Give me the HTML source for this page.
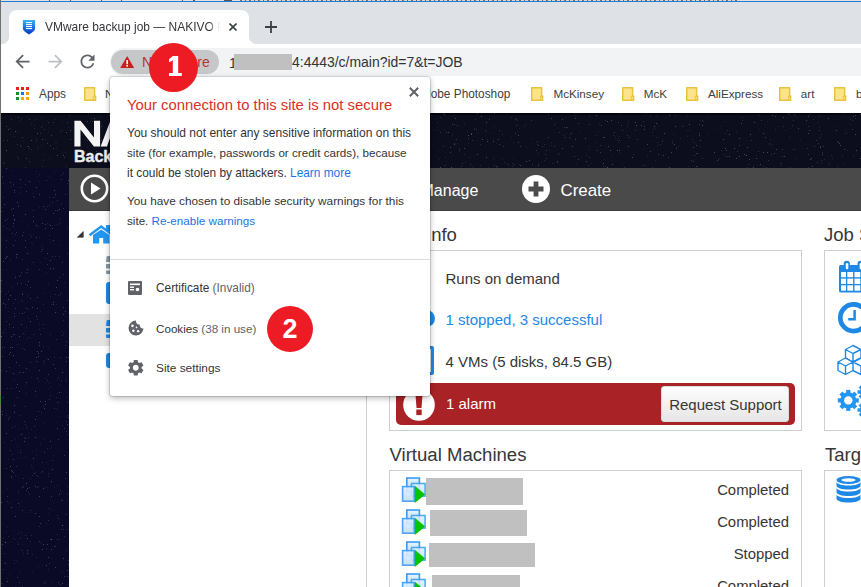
<!DOCTYPE html>
<html><head><meta charset="utf-8">
<style>
*{margin:0;padding:0;box-sizing:border-box}
html,body{width:861px;height:587px;overflow:hidden;background:#dee1e6;font-family:"Liberation Sans",sans-serif;position:relative}
.a{position:absolute}
.t{position:absolute;white-space:nowrap;line-height:1}
</style></head><body>

<!-- top strip -->
<div class="a" style="left:0;top:0;width:861px;height:1px;background:#e2e2e2"></div><svg class="a" style="left:0;top:0" width="240" height="1"><path d="M49 0h1v1h-1zM70 0h1v1h-1zM101 0h1v1h-1zM121 0h1v1h-1zM182 0h1v1h-1zM193 0h2v1h-2zM224 0h8v1h-8z" fill="#555"/></svg>
<div class="a" style="left:240px;top:0;width:500px;height:1px;background:repeating-linear-gradient(90deg,#8a6a50 0 2px,#d8dde4 2px 5px,#6a5a90 5px 6px,#e0d8d0 6px 9px)"></div>
<div class="a" style="left:0;top:1px;width:861px;height:1px;background:#1f7fd6"></div>

<!-- left border -->
<div class="a" style="left:0;top:0;width:1px;height:587px;background:#707070;z-index:50"></div><div class="a" style="left:0;top:395px;width:1px;height:10px;background:#3a8a3a;z-index:51"></div>

<!-- tab -->
<div class="a" style="left:9px;top:10px;width:240px;height:34px;background:#fff;border-radius:8px 8px 0 0"></div>
<div class="a" style="left:1px;top:36px;width:8px;height:8px;background:radial-gradient(circle at 0 0,#dee1e6 8px,#fff 8.5px)"></div>
<div class="a" style="left:249px;top:36px;width:8px;height:8px;background:radial-gradient(circle at 100% 0,#dee1e6 8px,#fff 8.5px)"></div>

<!-- favicon -->
<svg class="a" style="left:22px;top:19px" width="14" height="16" viewBox="22 19 14 16">
<defs><linearGradient id="fg" x1="0" y1="0" x2="0" y2="1"><stop offset="0" stop-color="#36b4fb"/><stop offset="1" stop-color="#0436c8"/></linearGradient></defs>
<path d="M22.9 20H35.1V28.6Q35.1 31.3 29 34.5Q22.9 31.3 22.9 28.6Z" fill="url(#fg)"/>
<g fill="#fff"><rect x="26" y="22" width="6" height="1.1"/><rect x="26" y="24" width="6" height="1.1"/><rect x="26" y="26" width="6" height="1.1"/><rect x="26" y="28" width="6" height="1.1"/></g>
</svg>
<div class="t" style="left:45px;top:22px;font-size:11.96px;color:#35363a;width:180px;overflow:hidden;-webkit-mask-image:linear-gradient(90deg,#000 165px,rgba(0,0,0,.25) 170px,transparent 176px)">VMware backup job — NAKIVO Backup</div>
<svg class="a" style="left:229px;top:23px" width="8" height="8" viewBox="0 0 8 8"><path d="M0.5 0.5L7.5 7.5M7.5 0.5L0.5 7.5" stroke="#3c4043" stroke-width="1.6"/></svg>
<svg class="a" style="left:265px;top:21px" width="12" height="12" viewBox="0 0 12 12"><path d="M6 0V12M0 6H12" stroke="#3c4043" stroke-width="1.8"/></svg>


<!-- page background -->
<div class="a" style="left:1px;top:112px;width:860px;height:56px;background:#0c0d1d"></div><div class="a" style="left:1px;top:113px;width:860px;height:2px;background:#04040c"></div>
<div class="a" style="left:1px;top:168px;width:860px;height:419px;background:#0a0a26"></div>
<svg class="a" style="left:0;top:112px" width="861" height="475" viewBox="0 0 861 475"><path fill="#b8bce0" opacity="0.1" d="M31 265h1v1h-1zM48 19h1v1h-1zM30 400h1v1h-1zM32 132h1v1h-1zM58 336h1v1h-1zM22 109h1v1h-1zM5 298h1v1h-1zM6 157h1v1h-1zM55 84h1v1h-1zM8 199h1v1h-1zM67 381h1v1h-1zM59 304h1v1h-1zM26 215h1v1h-1zM13 73h1v1h-1zM51 446h1v1h-1zM60 286h1v1h-1zM42 133h1v1h-1zM2 127h1v1h-1zM12 175h1v1h-1zM48 277h1v1h-1zM51 334h1v1h-1zM59 272h1v1h-1zM43 181h1v1h-1zM50 184h1v1h-1zM48 236h1v1h-1zM23 316h1v1h-1zM60 182h1v1h-1zM40 150h1v1h-1zM19 80h1v1h-1zM31 130h1v1h-1zM67 214h1v1h-1zM49 271h1v1h-1zM10 22h1v1h-1zM43 311h1v1h-1zM1 224h1v1h-1zM62 41h1v1h-1zM9 215h1v1h-1zM65 220h1v1h-1zM50 388h1v1h-1zM15 427h1v1h-1zM22 432h1v1h-1zM56 30h1v1h-1zM36 343h1v1h-1zM65 40h1v1h-1zM20 346h1v1h-1zM44 248h1v1h-1zM39 95h1v1h-1zM42 13h1v1h-1zM9 205h1v1h-1zM56 427h1v1h-1zM8 347h1v1h-1zM18 93h1v1h-1zM14 299h1v1h-1zM58 290h1v1h-1zM59 110h1v1h-1zM15 474h1v1h-1zM17 345h1v1h-1zM57 200h1v1h-1zM54 59h1v1h-1zM2 95h1v1h-1zM35 360h1v1h-1zM13 33h1v1h-1zM39 69h1v1h-1zM41 6h1v1h-1zM48 401h1v1h-1zM35 7h1v1h-1zM67 382h1v1h-1zM56 192h1v1h-1zM24 222h1v1h-1zM16 448h1v1h-1zM46 160h1v1h-1zM45 270h1v1h-1zM18 190h1v1h-1zM18 430h1v1h-1zM56 36h1v1h-1zM45 266h1v1h-1zM30 226h1v1h-1zM36 445h1v1h-1zM67 387h1v1h-1zM43 216h1v1h-1zM36 59h1v1h-1zM31 317h1v1h-1zM40 199h1v1h-1zM43 48h1v1h-1zM37 34h1v1h-1zM26 227h1v1h-1zM15 163h1v1h-1zM51 398h1v1h-1zM56 296h1v1h-1zM29 122h1v1h-1zM7 415h1v1h-1zM6 39h1v1h-1zM25 344h1v1h-1zM49 270h1v1h-1zM27 184h1v1h-1zM60 133h1v1h-1zM38 269h1v1h-1zM55 30h1v1h-1zM38 374h1v1h-1zM6 301h1v1h-1zM15 363h1v1h-1zM34 255h1v1h-1zM50 336h1v1h-1zM66 304h1v1h-1zM51 470h1v1h-1zM20 460h1v1h-1zM5 217h1v1h-1zM40 431h1v1h-1zM17 340h1v1h-1zM41 106h1v1h-1zM22 260h1v1h-1zM4 450h1v1h-1zM11 74h1v1h-1zM58 390h1v1h-1zM65 278h1v1h-1zM54 198h1v1h-1zM32 339h1v1h-1zM32 459h1v1h-1zM57 310h1v1h-1zM49 112h1v1h-1zM65 267h1v1h-1zM50 157h1v1h-1zM10 44h1v1h-1zM57 281h1v1h-1zM11 58h1v1h-1zM53 390h1v1h-1zM28 332h1v1h-1zM67 375h1v1h-1zM2 157h1v1h-1zM14 448h1v1h-1zM25 219h1v1h-1zM9 462h1v1h-1zM10 429h1v1h-1zM39 125h1v1h-1zM9 391h1v1h-1zM68 446h1v1h-1zM46 350h1v1h-1zM55 7h1v1h-1zM43 327h1v1h-1zM34 472h1v1h-1zM28 206h1v1h-1zM35 188h1v1h-1zM21 187h1v1h-1zM46 411h1v1h-1zM39 429h1v1h-1zM7 376h1v1h-1zM65 0h1v1h-1zM23 29h1v1h-1zM21 236h1v1h-1zM21 438h1v1h-1zM33 81h1v1h-1zM14 418h1v1h-1zM49 64h1v1h-1zM61 280h1v1h-1zM7 466h1v1h-1zM41 135h1v1h-1zM18 381h1v1h-1zM6 135h1v1h-1zM32 356h1v1h-1zM38 306h1v1h-1zM47 247h1v1h-1zM30 367h1v1h-1zM54 375h1v1h-1zM41 339h1v1h-1zM54 113h1v1h-1zM5 195h1v1h-1zM38 114h1v1h-1zM25 160h1v1h-1zM45 27h1v1h-1zM27 400h1v1h-1zM12 96h1v1h-1zM15 222h1v1h-1zM27 34h1v1h-1zM19 8h1v1h-1zM13 124h1v1h-1zM49 127h1v1h-1zM64 170h1v1h-1zM53 343h1v1h-1zM62 9h1v1h-1zM36 26h1v1h-1zM27 113h1v1h-1zM37 64h1v1h-1zM50 316h1v1h-1zM28 183h1v1h-1zM15 327h1v1h-1zM60 111h1v1h-1zM44 42h1v1h-1zM23 236h1v1h-1zM2 164h1v1h-1zM18 317h1v1h-1zM42 453h1v1h-1zM25 273h1v1h-1zM28 197h1v1h-1zM19 394h1v1h-1zM47 111h1v1h-1zM513 46h1v1h-1zM457 31h1v1h-1zM256 13h1v1h-1zM149 39h1v1h-1zM757 2h1v1h-1zM636 14h1v1h-1zM333 42h1v1h-1zM168 21h1v1h-1zM837 7h1v1h-1zM569 22h1v1h-1zM293 21h1v1h-1zM229 48h1v1h-1zM452 23h1v1h-1zM708 22h1v1h-1zM90 9h1v1h-1zM163 4h1v1h-1zM849 5h1v1h-1zM357 35h1v1h-1zM785 18h1v1h-1zM657 30h1v1h-1zM231 49h1v1h-1zM154 55h1v1h-1zM214 20h1v1h-1zM358 5h1v1h-1zM753 46h1v1h-1zM161 10h1v1h-1zM376 47h1v1h-1zM125 55h1v1h-1zM225 37h1v1h-1zM337 17h1v1h-1zM212 7h1v1h-1zM618 26h1v1h-1zM314 22h1v1h-1zM184 35h1v1h-1zM294 48h1v1h-1zM778 14h1v1h-1zM402 19h1v1h-1zM536 30h1v1h-1zM598 19h1v1h-1zM87 35h1v1h-1zM437 17h1v1h-1zM241 55h1v1h-1zM234 20h1v1h-1zM182 22h1v1h-1zM656 4h1v1h-1zM201 36h1v1h-1zM562 41h1v1h-1zM269 45h1v1h-1zM684 13h1v1h-1zM396 3h1v1h-1zM511 25h1v1h-1zM753 53h1v1h-1zM91 6h1v1h-1zM131 14h1v1h-1zM465 50h1v1h-1zM409 25h1v1h-1zM662 27h1v1h-1zM551 33h1v1h-1zM295 38h1v1h-1zM320 45h1v1h-1zM506 51h1v1h-1zM652 23h1v1h-1zM687 24h1v1h-1zM423 24h1v1h-1zM160 46h1v1h-1zM314 53h1v1h-1zM166 48h1v1h-1zM376 32h1v1h-1zM531 26h1v1h-1zM845 18h1v1h-1zM665 5h1v1h-1zM707 5h1v1h-1zM226 29h1v1h-1zM288 28h1v1h-1zM650 29h1v1h-1zM591 51h1v1h-1zM112 52h1v1h-1zM253 25h1v1h-1zM252 53h1v1h-1zM847 38h1v1h-1zM486 19h1v1h-1zM453 4h1v1h-1zM175 16h1v1h-1zM757 53h1v1h-1zM697 54h1v1h-1zM334 19h1v1h-1zM307 18h1v1h-1zM644 37h1v1h-1zM370 3h1v1h-1zM176 37h1v1h-1zM166 29h1v1h-1zM496 31h1v1h-1zM800 28h1v1h-1zM519 16h1v1h-1zM433 33h1v1h-1zM220 52h1v1h-1zM843 1h1v1h-1zM399 30h1v1h-1zM433 18h1v1h-1zM767 9h1v1h-1zM472 55h1v1h-1zM476 21h1v1h-1zM282 32h1v1h-1zM140 27h1v1h-1zM837 15h1v1h-1zM467 19h1v1h-1zM224 12h1v1h-1zM611 44h1v1h-1zM714 16h1v1h-1zM759 17h1v1h-1zM644 3h1v1h-1zM756 43h1v1h-1zM519 52h1v1h-1zM790 16h1v1h-1zM831 43h1v1h-1zM332 15h1v1h-1zM493 26h1v1h-1zM658 13h1v1h-1zM124 2h1v1h-1zM576 52h1v1h-1zM628 25h1v1h-1zM619 24h1v1h-1zM522 41h1v1h-1zM388 36h1v1h-1zM170 3h1v1h-1zM318 55h1v1h-1zM384 49h1v1h-1zM655 16h1v1h-1zM642 53h1v1h-1zM82 23h1v1h-1zM384 55h1v1h-1zM116 32h1v1h-1zM719 46h1v1h-1zM378 33h1v1h-1zM513 30h1v1h-1zM687 18h1v1h-1zM286 31h1v1h-1zM487 27h1v1h-1zM298 45h1v1h-1zM488 55h1v1h-1zM725 21h1v1h-1zM365 36h1v1h-1zM619 1h1v1h-1zM236 39h1v1h-1zM764 12h1v1h-1zM444 17h1v1h-1zM850 12h1v1h-1zM118 47h1v1h-1zM297 31h1v1h-1zM266 16h1v1h-1zM314 33h1v1h-1zM474 17h1v1h-1zM396 21h1v1h-1zM246 1h1v1h-1zM699 34h1v1h-1zM295 10h1v1h-1zM658 25h1v1h-1zM526 35h1v1h-1zM573 14h1v1h-1zM444 53h1v1h-1zM724 10h1v1h-1zM721 14h1v1h-1zM256 16h1v1h-1zM566 21h1v1h-1zM115 27h1v1h-1zM107 1h1v1h-1zM847 20h1v1h-1zM330 8h1v1h-1zM538 51h1v1h-1zM219 40h1v1h-1zM95 10h1v1h-1zM439 47h1v1h-1zM98 1h1v1h-1zM158 16h1v1h-1zM227 35h1v1h-1zM202 9h1v1h-1zM493 21h1v1h-1zM187 31h1v1h-1zM294 16h1v1h-1zM622 51h1v1h-1zM216 22h1v1h-1zM655 48h1v1h-1zM182 22h1v1h-1zM687 3h1v1h-1zM509 19h1v1h-1zM747 52h1v1h-1zM402 17h1v1h-1zM688 54h1v1h-1zM502 47h1v1h-1zM250 1h1v1h-1zM570 26h1v1h-1zM277 33h1v1h-1zM549 38h1v1h-1zM452 22h1v1h-1zM421 16h1v1h-1zM770 27h1v1h-1zM173 7h1v1h-1zM546 26h1v1h-1zM179 30h1v1h-1zM266 30h1v1h-1zM620 40h1v1h-1zM436 6h1v1h-1zM579 20h1v1h-1zM391 36h1v1h-1zM604 47h1v1h-1zM270 42h1v1h-1zM228 16h1v1h-1z"/><path fill="#b8bce0" opacity="0.16" d="M63 221h1v1h-1zM13 114h1v1h-1zM36 304h1v1h-1zM68 472h1v1h-1zM20 33h1v1h-1zM58 183h1v1h-1zM9 117h1v1h-1zM39 212h1v1h-1zM15 128h1v1h-1zM21 420h1v1h-1zM15 122h1v1h-1zM21 34h1v1h-1zM14 451h1v1h-1zM17 334h1v1h-1zM12 342h1v1h-1zM39 62h1v1h-1zM25 423h1v1h-1zM10 16h1v1h-1zM48 457h1v1h-1zM22 474h1v1h-1zM51 427h1v1h-1zM24 325h1v1h-1zM29 375h1v1h-1zM6 303h1v1h-1zM50 275h1v1h-1zM62 313h1v1h-1zM31 423h1v1h-1zM57 403h1v1h-1zM43 234h1v1h-1zM60 19h1v1h-1zM31 11h1v1h-1zM57 112h1v1h-1zM47 94h1v1h-1zM33 84h1v1h-1zM49 85h1v1h-1zM19 164h1v1h-1zM59 165h1v1h-1zM38 364h1v1h-1zM34 13h1v1h-1zM65 233h1v1h-1zM28 380h1v1h-1zM66 438h1v1h-1zM22 438h1v1h-1zM61 63h1v1h-1zM66 54h1v1h-1zM32 363h1v1h-1zM51 192h1v1h-1zM61 380h1v1h-1zM43 192h1v1h-1zM48 364h1v1h-1zM48 361h1v1h-1zM42 350h1v1h-1zM66 269h1v1h-1zM41 360h1v1h-1zM36 283h1v1h-1zM20 340h1v1h-1zM21 6h1v1h-1zM17 20h1v1h-1zM67 115h1v1h-1zM50 222h1v1h-1zM42 54h1v1h-1zM14 24h1v1h-1zM8 424h1v1h-1zM41 300h1v1h-1zM52 90h1v1h-1zM63 417h1v1h-1zM3 28h1v1h-1zM19 201h1v1h-1zM45 469h1v1h-1zM15 314h1v1h-1zM6 144h1v1h-1zM25 55h1v1h-1zM63 208h1v1h-1zM55 144h1v1h-1zM22 189h1v1h-1zM64 424h1v1h-1zM25 172h1v1h-1zM14 267h1v1h-1zM57 267h1v1h-1zM36 363h1v1h-1zM57 422h1v1h-1zM36 337h1v1h-1zM18 421h1v1h-1zM38 454h1v1h-1zM19 253h1v1h-1zM49 46h1v1h-1zM33 222h1v1h-1zM59 144h1v1h-1zM37 249h1v1h-1zM39 217h1v1h-1zM1 471h1v1h-1zM27 316h1v1h-1zM47 336h1v1h-1zM13 191h1v1h-1zM7 107h1v1h-1zM8 179h1v1h-1zM11 364h1v1h-1zM40 331h1v1h-1zM23 441h1v1h-1zM56 285h1v1h-1zM3 85h1v1h-1zM45 146h1v1h-1zM26 281h1v1h-1zM14 222h1v1h-1zM66 285h1v1h-1zM39 429h1v1h-1zM36 249h1v1h-1zM30 429h1v1h-1zM50 427h1v1h-1zM50 283h1v1h-1zM41 33h1v1h-1zM4 330h1v1h-1zM62 459h1v1h-1zM29 382h1v1h-1zM61 387h1v1h-1zM40 21h1v1h-1zM3 426h1v1h-1zM61 92h1v1h-1zM4 50h1v1h-1zM31 37h1v1h-1zM49 93h1v1h-1zM46 375h1v1h-1zM26 314h1v1h-1zM19 303h1v1h-1zM13 426h1v1h-1zM68 15h1v1h-1zM34 85h1v1h-1zM25 312h1v1h-1zM54 245h1v1h-1zM17 232h1v1h-1zM34 16h1v1h-1zM13 72h1v1h-1zM18 379h1v1h-1zM10 147h1v1h-1zM43 249h1v1h-1zM7 389h1v1h-1zM57 373h1v1h-1zM31 353h1v1h-1zM3 473h1v1h-1zM32 442h1v1h-1zM61 219h1v1h-1zM68 322h1v1h-1zM48 172h1v1h-1zM25 72h1v1h-1zM6 419h1v1h-1zM3 71h1v1h-1zM49 123h1v1h-1zM20 338h1v1h-1zM59 107h1v1h-1zM2 299h1v1h-1zM67 141h1v1h-1zM46 436h1v1h-1zM5 182h1v1h-1zM12 315h1v1h-1zM17 44h1v1h-1zM24 200h1v1h-1zM27 173h1v1h-1zM4 235h1v1h-1zM23 120h1v1h-1zM65 366h1v1h-1zM43 294h1v1h-1zM60 181h1v1h-1zM62 18h1v1h-1zM67 71h1v1h-1zM1 258h1v1h-1zM380 13h1v1h-1zM459 36h1v1h-1zM317 40h1v1h-1zM832 46h1v1h-1zM195 34h1v1h-1zM361 15h1v1h-1zM475 7h1v1h-1zM158 25h1v1h-1zM680 26h1v1h-1zM727 44h1v1h-1zM599 12h1v1h-1zM532 52h1v1h-1zM613 23h1v1h-1zM808 55h1v1h-1zM107 39h1v1h-1zM855 6h1v1h-1zM364 17h1v1h-1zM618 30h1v1h-1zM517 8h1v1h-1zM249 27h1v1h-1zM775 17h1v1h-1zM589 34h1v1h-1zM828 0h1v1h-1zM724 42h1v1h-1zM821 22h1v1h-1zM627 14h1v1h-1zM789 1h1v1h-1zM525 12h1v1h-1zM376 20h1v1h-1zM143 18h1v1h-1zM152 8h1v1h-1zM628 9h1v1h-1zM852 8h1v1h-1zM468 31h1v1h-1zM615 25h1v1h-1zM596 23h1v1h-1zM544 32h1v1h-1zM653 17h1v1h-1zM652 55h1v1h-1zM692 27h1v1h-1zM746 43h1v1h-1zM504 50h1v1h-1zM700 8h1v1h-1zM232 35h1v1h-1zM567 15h1v1h-1zM652 20h1v1h-1zM405 45h1v1h-1zM657 33h1v1h-1zM424 3h1v1h-1zM400 15h1v1h-1zM394 7h1v1h-1zM718 47h1v1h-1zM147 50h1v1h-1zM780 53h1v1h-1zM837 54h1v1h-1zM624 55h1v1h-1zM121 25h1v1h-1zM647 43h1v1h-1zM88 19h1v1h-1zM157 44h1v1h-1zM167 31h1v1h-1zM474 16h1v1h-1zM241 25h1v1h-1zM742 5h1v1h-1zM742 8h1v1h-1zM360 24h1v1h-1zM502 22h1v1h-1zM76 22h1v1h-1zM727 18h1v1h-1zM113 42h1v1h-1zM106 34h1v1h-1zM574 1h1v1h-1zM795 4h1v1h-1zM650 4h1v1h-1zM596 30h1v1h-1zM512 51h1v1h-1zM236 23h1v1h-1zM493 46h1v1h-1zM443 1h1v1h-1zM537 29h1v1h-1zM736 20h1v1h-1zM275 40h1v1h-1zM524 14h1v1h-1zM512 54h1v1h-1zM789 25h1v1h-1zM311 47h1v1h-1zM299 48h1v1h-1zM494 14h1v1h-1zM551 30h1v1h-1zM356 44h1v1h-1zM517 19h1v1h-1zM589 4h1v1h-1zM759 3h1v1h-1zM464 11h1v1h-1zM821 51h1v1h-1zM749 52h1v1h-1zM84 27h1v1h-1zM480 53h1v1h-1zM480 32h1v1h-1zM69 3h1v1h-1zM485 18h1v1h-1zM689 18h1v1h-1zM257 36h1v1h-1zM215 13h1v1h-1zM694 30h1v1h-1zM790 55h1v1h-1zM369 16h1v1h-1zM538 41h1v1h-1zM445 45h1v1h-1zM339 52h1v1h-1zM817 10h1v1h-1zM344 2h1v1h-1zM673 22h1v1h-1zM206 41h1v1h-1zM236 1h1v1h-1zM437 10h1v1h-1zM769 32h1v1h-1zM297 9h1v1h-1zM819 15h1v1h-1zM145 38h1v1h-1zM569 25h1v1h-1zM419 4h1v1h-1zM725 44h1v1h-1zM844 51h1v1h-1zM703 9h1v1h-1zM552 51h1v1h-1zM120 37h1v1h-1zM216 38h1v1h-1zM586 43h1v1h-1zM397 22h1v1h-1zM672 31h1v1h-1zM783 14h1v1h-1zM497 55h1v1h-1zM445 53h1v1h-1zM125 15h1v1h-1zM126 21h1v1h-1zM824 47h1v1h-1zM243 48h1v1h-1zM272 44h1v1h-1zM629 25h1v1h-1zM427 17h1v1h-1zM563 23h1v1h-1zM366 50h1v1h-1zM842 43h1v1h-1zM588 37h1v1h-1zM339 39h1v1h-1zM633 42h1v1h-1zM268 39h1v1h-1zM850 7h1v1h-1zM401 8h1v1h-1zM348 42h1v1h-1zM285 20h1v1h-1zM186 17h1v1h-1zM266 9h1v1h-1zM278 27h1v1h-1zM410 46h1v1h-1zM628 12h1v1h-1zM348 55h1v1h-1zM544 48h1v1h-1zM85 39h1v1h-1zM275 0h1v1h-1zM617 28h1v1h-1zM307 1h1v1h-1zM766 55h1v1h-1zM795 46h1v1h-1zM127 13h1v1h-1zM186 21h1v1h-1zM537 32h1v1h-1zM126 42h1v1h-1zM333 53h1v1h-1zM511 5h1v1h-1zM323 14h1v1h-1zM795 37h1v1h-1zM464 42h1v1h-1zM559 41h1v1h-1zM109 46h1v1h-1zM185 9h1v1h-1zM556 10h1v1h-1zM334 0h1v1h-1zM772 32h1v1h-1zM813 7h1v1h-1zM363 39h1v1h-1zM828 50h1v1h-1zM588 53h1v1h-1zM324 33h1v1h-1zM747 55h1v1h-1zM286 55h1v1h-1zM574 3h1v1h-1zM656 25h1v1h-1zM197 1h1v1h-1zM396 10h1v1h-1zM603 54h1v1h-1zM97 25h1v1h-1zM721 38h1v1h-1zM363 6h1v1h-1zM577 1h1v1h-1zM197 3h1v1h-1zM546 46h1v1h-1zM769 31h1v1h-1zM605 54h1v1h-1zM853 44h1v1h-1zM469 45h1v1h-1zM187 23h1v1h-1zM360 49h1v1h-1zM548 2h1v1h-1zM182 43h1v1h-1zM234 36h1v1h-1zM127 51h1v1h-1zM322 40h1v1h-1zM678 34h1v1h-1zM763 54h1v1h-1zM358 36h1v1h-1zM267 17h1v1h-1zM148 44h1v1h-1zM646 1h1v1h-1z"/><path fill="#b8bce0" opacity="0.22" d="M7 144h1v1h-1zM7 384h1v1h-1zM11 7h1v1h-1zM36 28h1v1h-1zM3 220h1v1h-1zM34 314h1v1h-1zM66 402h1v1h-1zM1 99h1v1h-1zM62 223h1v1h-1zM67 188h1v1h-1zM7 28h1v1h-1zM15 187h1v1h-1zM7 276h1v1h-1zM17 285h1v1h-1zM66 229h1v1h-1zM29 49h1v1h-1zM3 457h1v1h-1zM41 139h1v1h-1zM63 96h1v1h-1zM54 434h1v1h-1zM68 417h1v1h-1zM30 398h1v1h-1zM6 356h1v1h-1zM18 5h1v1h-1zM14 80h1v1h-1zM55 434h1v1h-1zM49 451h1v1h-1zM15 196h1v1h-1zM22 398h1v1h-1zM6 14h1v1h-1zM2 64h1v1h-1zM43 212h1v1h-1zM42 359h1v1h-1zM64 343h1v1h-1zM60 378h1v1h-1zM44 340h1v1h-1zM67 464h1v1h-1zM37 375h1v1h-1zM6 209h1v1h-1zM23 374h1v1h-1zM58 327h1v1h-1zM58 265h1v1h-1zM22 181h1v1h-1zM58 427h1v1h-1zM47 31h1v1h-1zM33 150h1v1h-1zM63 61h1v1h-1zM53 10h1v1h-1zM47 152h1v1h-1zM25 294h1v1h-1zM37 207h1v1h-1zM44 251h1v1h-1zM51 384h1v1h-1zM62 150h1v1h-1zM28 325h1v1h-1zM13 96h1v1h-1zM64 45h1v1h-1zM23 221h1v1h-1zM48 408h1v1h-1zM18 432h1v1h-1zM61 417h1v1h-1zM50 33h1v1h-1zM67 10h1v1h-1zM68 303h1v1h-1zM4 441h1v1h-1zM25 135h1v1h-1zM51 23h1v1h-1zM68 448h1v1h-1zM5 430h1v1h-1zM31 124h1v1h-1zM68 452h1v1h-1zM54 296h1v1h-1zM25 128h1v1h-1zM47 268h1v1h-1zM17 465h1v1h-1zM38 299h1v1h-1zM23 260h1v1h-1zM30 175h1v1h-1zM55 256h1v1h-1zM13 360h1v1h-1zM2 244h1v1h-1zM66 309h1v1h-1zM27 160h1v1h-1zM66 319h1v1h-1zM63 195h1v1h-1zM26 79h1v1h-1zM14 201h1v1h-1zM8 307h1v1h-1zM53 85h1v1h-1zM3 51h1v1h-1zM12 359h1v1h-1zM56 227h1v1h-1zM63 162h1v1h-1zM33 104h1v1h-1zM55 182h1v1h-1zM19 470h1v1h-1zM45 112h1v1h-1zM26 378h1v1h-1zM49 287h1v1h-1zM60 245h1v1h-1zM44 471h1v1h-1zM11 365h1v1h-1zM6 128h1v1h-1zM22 147h1v1h-1zM6 145h1v1h-1zM1 179h1v1h-1zM55 98h1v1h-1zM21 160h1v1h-1zM18 94h1v1h-1zM50 156h1v1h-1zM29 7h1v1h-1zM24 309h1v1h-1zM57 290h1v1h-1zM24 237h1v1h-1zM10 338h1v1h-1zM68 245h1v1h-1zM49 396h1v1h-1zM6 116h1v1h-1zM20 426h1v1h-1zM57 88h1v1h-1zM38 36h1v1h-1zM39 157h1v1h-1zM44 17h1v1h-1zM46 68h1v1h-1zM58 406h1v1h-1zM22 25h1v1h-1zM52 144h1v1h-1zM17 32h1v1h-1zM16 354h1v1h-1zM9 255h1v1h-1zM17 142h1v1h-1zM64 464h1v1h-1zM33 98h1v1h-1zM60 472h1v1h-1zM62 413h1v1h-1zM64 316h1v1h-1zM30 250h1v1h-1zM65 82h1v1h-1zM16 275h1v1h-1zM39 414h1v1h-1zM2 235h1v1h-1zM12 121h1v1h-1zM11 328h1v1h-1zM3 114h1v1h-1zM61 67h1v1h-1zM29 36h1v1h-1zM52 348h1v1h-1zM16 120h1v1h-1zM67 290h1v1h-1zM23 366h1v1h-1zM41 15h1v1h-1zM11 97h1v1h-1zM20 163h1v1h-1zM20 75h1v1h-1zM28 225h1v1h-1zM11 276h1v1h-1zM48 262h1v1h-1zM48 10h1v1h-1zM5 192h1v1h-1zM40 222h1v1h-1zM61 268h1v1h-1zM13 222h1v1h-1zM21 171h1v1h-1zM14 108h1v1h-1zM503 34h1v1h-1zM343 49h1v1h-1zM662 29h1v1h-1zM119 3h1v1h-1zM197 48h1v1h-1zM699 21h1v1h-1zM635 18h1v1h-1zM215 0h1v1h-1zM330 1h1v1h-1zM702 46h1v1h-1zM558 42h1v1h-1zM845 21h1v1h-1zM702 8h1v1h-1zM207 5h1v1h-1zM808 14h1v1h-1zM564 15h1v1h-1zM109 3h1v1h-1zM114 30h1v1h-1zM420 46h1v1h-1zM643 9h1v1h-1zM696 41h1v1h-1zM385 44h1v1h-1zM589 45h1v1h-1zM346 24h1v1h-1zM76 28h1v1h-1zM494 53h1v1h-1zM242 22h1v1h-1zM285 37h1v1h-1zM819 18h1v1h-1zM578 11h1v1h-1zM557 49h1v1h-1zM565 25h1v1h-1zM538 33h1v1h-1zM387 48h1v1h-1zM169 55h1v1h-1zM457 13h1v1h-1zM855 3h1v1h-1zM758 39h1v1h-1zM98 19h1v1h-1zM557 50h1v1h-1zM546 38h1v1h-1zM814 34h1v1h-1zM470 52h1v1h-1zM343 39h1v1h-1zM601 13h1v1h-1zM139 20h1v1h-1zM440 20h1v1h-1zM600 33h1v1h-1zM386 36h1v1h-1zM163 26h1v1h-1zM817 50h1v1h-1zM837 29h1v1h-1zM390 34h1v1h-1zM396 0h1v1h-1zM192 29h1v1h-1zM105 23h1v1h-1zM329 27h1v1h-1zM818 31h1v1h-1zM381 16h1v1h-1zM446 20h1v1h-1zM117 29h1v1h-1zM363 17h1v1h-1zM834 0h1v1h-1zM361 16h1v1h-1zM111 5h1v1h-1zM268 15h1v1h-1zM136 55h1v1h-1zM808 42h1v1h-1zM528 0h1v1h-1zM411 21h1v1h-1zM198 19h1v1h-1zM621 13h1v1h-1zM368 40h1v1h-1zM454 12h1v1h-1zM96 39h1v1h-1zM332 8h1v1h-1zM614 20h1v1h-1zM822 40h1v1h-1zM644 14h1v1h-1zM173 27h1v1h-1zM284 15h1v1h-1zM761 8h1v1h-1zM682 14h1v1h-1zM362 40h1v1h-1zM816 28h1v1h-1zM516 6h1v1h-1zM852 17h1v1h-1zM92 31h1v1h-1zM627 23h1v1h-1zM454 31h1v1h-1zM334 39h1v1h-1zM536 38h1v1h-1zM554 34h1v1h-1zM88 1h1v1h-1zM668 45h1v1h-1zM603 25h1v1h-1zM254 49h1v1h-1zM208 8h1v1h-1zM269 26h1v1h-1zM131 42h1v1h-1zM397 55h1v1h-1zM375 7h1v1h-1zM694 43h1v1h-1zM336 44h1v1h-1zM793 8h1v1h-1zM231 49h1v1h-1zM829 52h1v1h-1zM820 25h1v1h-1zM672 29h1v1h-1zM819 4h1v1h-1zM314 42h1v1h-1zM110 9h1v1h-1zM81 17h1v1h-1zM101 14h1v1h-1zM559 20h1v1h-1zM443 34h1v1h-1zM320 19h1v1h-1zM792 13h1v1h-1zM531 8h1v1h-1zM462 51h1v1h-1zM70 27h1v1h-1zM270 50h1v1h-1zM508 52h1v1h-1zM456 27h1v1h-1zM299 47h1v1h-1zM87 28h1v1h-1zM807 36h1v1h-1zM691 48h1v1h-1zM87 9h1v1h-1zM699 12h1v1h-1zM619 28h1v1h-1zM319 15h1v1h-1zM217 36h1v1h-1zM823 34h1v1h-1zM97 48h1v1h-1zM350 29h1v1h-1zM675 3h1v1h-1zM772 3h1v1h-1zM105 39h1v1h-1zM440 5h1v1h-1zM429 26h1v1h-1zM386 37h1v1h-1zM413 36h1v1h-1zM554 12h1v1h-1zM224 51h1v1h-1zM660 32h1v1h-1zM644 53h1v1h-1zM548 25h1v1h-1zM494 1h1v1h-1zM697 41h1v1h-1zM622 18h1v1h-1zM793 37h1v1h-1zM768 48h1v1h-1zM106 38h1v1h-1zM499 32h1v1h-1zM208 15h1v1h-1zM597 38h1v1h-1zM324 26h1v1h-1zM350 20h1v1h-1zM281 6h1v1h-1zM771 42h1v1h-1zM468 26h1v1h-1zM383 30h1v1h-1zM476 17h1v1h-1zM751 28h1v1h-1zM855 0h1v1h-1zM514 52h1v1h-1zM413 42h1v1h-1zM782 37h1v1h-1zM240 25h1v1h-1zM499 18h1v1h-1zM83 12h1v1h-1zM589 12h1v1h-1zM96 44h1v1h-1zM180 11h1v1h-1zM92 9h1v1h-1zM809 2h1v1h-1zM515 21h1v1h-1zM461 54h1v1h-1zM737 39h1v1h-1zM637 27h1v1h-1zM373 29h1v1h-1zM516 13h1v1h-1zM130 48h1v1h-1zM794 2h1v1h-1zM372 39h1v1h-1zM788 2h1v1h-1zM158 54h1v1h-1zM515 7h1v1h-1zM566 15h1v1h-1zM618 10h1v1h-1zM450 40h1v1h-1zM115 5h1v1h-1zM489 7h1v1h-1zM341 6h1v1h-1zM600 40h1v1h-1zM77 26h1v1h-1zM472 28h1v1h-1zM298 25h1v1h-1zM605 8h1v1h-1zM545 42h1v1h-1zM238 24h1v1h-1zM782 44h1v1h-1zM232 2h1v1h-1zM307 51h1v1h-1zM820 34h1v1h-1zM821 48h1v1h-1zM320 9h1v1h-1zM144 9h1v1h-1zM170 39h1v1h-1zM542 34h1v1h-1zM365 22h1v1h-1zM348 19h1v1h-1zM374 35h1v1h-1zM775 4h1v1h-1zM348 26h1v1h-1zM574 44h1v1h-1zM163 4h1v1h-1z"/><path fill="#b8bce0" opacity="0.3" d="M35 279h1v1h-1zM13 243h1v1h-1zM43 376h1v1h-1zM67 458h1v1h-1zM45 292h1v1h-1zM53 190h1v1h-1zM53 128h1v1h-1zM66 360h1v1h-1zM13 347h1v1h-1zM9 305h1v1h-1zM7 469h1v1h-1zM53 156h1v1h-1zM40 411h1v1h-1zM62 388h1v1h-1zM17 90h1v1h-1zM18 391h1v1h-1zM5 108h1v1h-1zM39 404h1v1h-1zM31 28h1v1h-1zM67 312h1v1h-1zM2 432h1v1h-1zM2 302h1v1h-1zM33 346h1v1h-1zM6 259h1v1h-1zM62 413h1v1h-1zM40 289h1v1h-1zM3 285h1v1h-1zM33 109h1v1h-1zM42 437h1v1h-1zM21 322h1v1h-1zM14 204h1v1h-1zM10 235h1v1h-1zM22 375h1v1h-1zM55 455h1v1h-1zM48 247h1v1h-1zM27 376h1v1h-1zM43 432h1v1h-1zM26 270h1v1h-1zM45 97h1v1h-1zM55 82h1v1h-1zM10 70h1v1h-1zM16 250h1v1h-1zM15 404h1v1h-1zM66 249h1v1h-1zM37 239h1v1h-1zM66 245h1v1h-1zM39 233h1v1h-1zM37 196h1v1h-1zM19 224h1v1h-1zM14 293h1v1h-1zM14 107h1v1h-1zM9 242h1v1h-1zM26 196h1v1h-1zM36 75h1v1h-1zM18 46h1v1h-1zM47 432h1v1h-1zM35 325h1v1h-1zM8 17h1v1h-1zM38 244h1v1h-1zM58 470h1v1h-1zM5 451h1v1h-1zM36 204h1v1h-1zM13 215h1v1h-1zM14 78h1v1h-1zM41 239h1v1h-1zM51 369h1v1h-1zM53 192h1v1h-1zM1 168h1v1h-1zM44 296h1v1h-1zM37 185h1v1h-1zM68 305h1v1h-1zM4 92h1v1h-1zM26 46h1v1h-1zM38 241h1v1h-1zM11 224h1v1h-1zM12 235h1v1h-1zM42 27h1v1h-1zM65 199h1v1h-1zM11 358h1v1h-1zM27 426h1v1h-1zM53 252h1v1h-1zM50 113h1v1h-1zM6 321h1v1h-1zM6 56h1v1h-1zM53 101h1v1h-1zM56 175h1v1h-1zM51 437h1v1h-1zM39 230h1v1h-1zM47 141h1v1h-1zM53 36h1v1h-1zM50 329h1v1h-1zM20 67h1v1h-1zM63 446h1v1h-1zM17 171h1v1h-1zM6 38h1v1h-1zM51 427h1v1h-1zM10 354h1v1h-1zM45 116h1v1h-1zM57 316h1v1h-1zM59 382h1v1h-1zM55 200h1v1h-1zM29 69h1v1h-1zM5 146h1v1h-1zM13 103h1v1h-1zM13 133h1v1h-1zM36 245h1v1h-1zM1 224h1v1h-1zM22 123h1v1h-1zM1 390h1v1h-1zM63 43h1v1h-1zM57 98h1v1h-1zM11 395h1v1h-1zM25 326h1v1h-1zM8 187h1v1h-1zM42 137h1v1h-1zM26 256h1v1h-1zM57 43h1v1h-1zM28 34h1v1h-1zM63 202h1v1h-1zM35 307h1v1h-1zM27 157h1v1h-1zM45 289h1v1h-1zM35 374h1v1h-1zM62 260h1v1h-1zM43 94h1v1h-1zM37 266h1v1h-1zM62 471h1v1h-1zM17 272h1v1h-1zM10 183h1v1h-1zM39 82h1v1h-1zM36 125h1v1h-1zM32 195h1v1h-1zM52 357h1v1h-1zM9 212h1v1h-1zM36 113h1v1h-1zM28 169h1v1h-1zM57 168h1v1h-1zM14 300h1v1h-1zM50 148h1v1h-1zM48 445h1v1h-1zM16 145h1v1h-1zM13 111h1v1h-1zM16 142h1v1h-1zM37 21h1v1h-1zM52 116h1v1h-1zM19 260h1v1h-1zM27 441h1v1h-1zM35 401h1v1h-1zM54 78h1v1h-1zM42 111h1v1h-1zM30 209h1v1h-1zM5 430h1v1h-1zM39 258h1v1h-1zM3 149h1v1h-1zM19 279h1v1h-1zM25 102h1v1h-1zM66 20h1v1h-1zM34 361h1v1h-1zM68 68h1v1h-1zM27 141h1v1h-1zM3 191h1v1h-1zM24 329h1v1h-1zM59 280h1v1h-1zM26 371h1v1h-1zM15 165h1v1h-1zM13 261h1v1h-1zM21 212h1v1h-1zM59 97h1v1h-1zM27 438h1v1h-1zM22 182h1v1h-1zM22 201h1v1h-1zM15 19h1v1h-1zM39 384h1v1h-1zM46 453h1v1h-1zM30 186h1v1h-1zM10 240h1v1h-1zM836 18h1v1h-1zM619 38h1v1h-1zM326 9h1v1h-1zM270 28h1v1h-1zM736 46h1v1h-1zM518 23h1v1h-1zM628 34h1v1h-1zM162 2h1v1h-1zM295 40h1v1h-1zM498 27h1v1h-1zM455 6h1v1h-1zM325 1h1v1h-1zM358 14h1v1h-1zM131 10h1v1h-1zM451 55h1v1h-1zM288 52h1v1h-1zM753 55h1v1h-1zM353 42h1v1h-1zM314 28h1v1h-1zM77 11h1v1h-1zM486 45h1v1h-1zM349 15h1v1h-1zM656 11h1v1h-1zM607 9h1v1h-1zM388 18h1v1h-1zM323 42h1v1h-1zM409 53h1v1h-1zM571 21h1v1h-1zM747 35h1v1h-1zM159 46h1v1h-1zM373 12h1v1h-1zM477 1h1v1h-1zM806 8h1v1h-1zM440 55h1v1h-1zM734 36h1v1h-1zM811 46h1v1h-1zM700 28h1v1h-1zM267 45h1v1h-1zM428 30h1v1h-1zM754 10h1v1h-1zM290 36h1v1h-1zM127 31h1v1h-1zM260 44h1v1h-1zM763 40h1v1h-1zM410 0h1v1h-1zM171 6h1v1h-1zM352 10h1v1h-1zM856 38h1v1h-1zM392 25h1v1h-1zM255 32h1v1h-1zM295 47h1v1h-1zM604 25h1v1h-1zM808 21h1v1h-1zM418 53h1v1h-1zM301 38h1v1h-1zM365 40h1v1h-1zM855 22h1v1h-1zM725 36h1v1h-1zM81 48h1v1h-1zM493 29h1v1h-1zM307 28h1v1h-1zM171 4h1v1h-1zM190 45h1v1h-1zM650 39h1v1h-1zM307 54h1v1h-1zM578 47h1v1h-1zM157 51h1v1h-1zM586 49h1v1h-1zM654 14h1v1h-1zM108 46h1v1h-1zM245 5h1v1h-1zM452 12h1v1h-1zM538 53h1v1h-1zM358 33h1v1h-1zM318 27h1v1h-1zM477 42h1v1h-1zM699 23h1v1h-1zM750 22h1v1h-1zM693 35h1v1h-1zM607 55h1v1h-1zM664 21h1v1h-1zM162 17h1v1h-1zM158 6h1v1h-1zM603 51h1v1h-1zM459 38h1v1h-1zM376 43h1v1h-1zM152 41h1v1h-1zM200 32h1v1h-1zM229 19h1v1h-1zM119 46h1v1h-1zM411 34h1v1h-1zM518 30h1v1h-1zM822 42h1v1h-1zM689 12h1v1h-1zM551 6h1v1h-1zM674 32h1v1h-1zM781 51h1v1h-1zM266 1h1v1h-1zM301 14h1v1h-1zM749 47h1v1h-1zM156 52h1v1h-1zM783 5h1v1h-1zM596 3h1v1h-1zM746 43h1v1h-1zM481 4h1v1h-1zM486 10h1v1h-1zM839 31h1v1h-1zM812 54h1v1h-1zM808 4h1v1h-1zM94 6h1v1h-1zM726 38h1v1h-1zM729 22h1v1h-1zM80 43h1v1h-1zM276 32h1v1h-1zM275 29h1v1h-1zM270 49h1v1h-1zM262 12h1v1h-1zM362 19h1v1h-1zM79 27h1v1h-1zM181 40h1v1h-1zM767 40h1v1h-1zM363 6h1v1h-1zM285 52h1v1h-1zM125 10h1v1h-1zM312 10h1v1h-1zM245 4h1v1h-1zM195 18h1v1h-1zM696 54h1v1h-1zM739 26h1v1h-1zM243 44h1v1h-1zM464 36h1v1h-1zM810 47h1v1h-1zM641 13h1v1h-1zM343 31h1v1h-1zM450 35h1v1h-1zM702 13h1v1h-1zM468 23h1v1h-1zM729 44h1v1h-1zM632 45h1v1h-1zM262 51h1v1h-1zM340 44h1v1h-1zM155 55h1v1h-1zM669 55h1v1h-1zM562 7h1v1h-1zM575 27h1v1h-1zM373 19h1v1h-1zM612 52h1v1h-1zM330 51h1v1h-1zM482 27h1v1h-1zM226 32h1v1h-1zM260 18h1v1h-1zM820 35h1v1h-1zM255 26h1v1h-1zM828 6h1v1h-1zM411 38h1v1h-1zM486 10h1v1h-1zM188 30h1v1h-1zM284 40h1v1h-1zM644 17h1v1h-1zM676 36h1v1h-1zM411 5h1v1h-1zM170 23h1v1h-1zM608 34h1v1h-1zM444 0h1v1h-1zM454 32h1v1h-1zM163 17h1v1h-1zM471 22h1v1h-1zM358 24h1v1h-1zM309 43h1v1h-1zM765 25h1v1h-1zM247 43h1v1h-1zM496 54h1v1h-1zM675 14h1v1h-1zM201 35h1v1h-1zM776 37h1v1h-1zM520 53h1v1h-1zM128 16h1v1h-1zM617 38h1v1h-1zM760 52h1v1h-1zM162 4h1v1h-1zM717 48h1v1h-1zM418 45h1v1h-1zM520 34h1v1h-1zM245 34h1v1h-1zM187 53h1v1h-1zM339 24h1v1h-1zM204 19h1v1h-1zM248 20h1v1h-1zM250 40h1v1h-1zM144 2h1v1h-1zM118 5h1v1h-1zM739 26h1v1h-1zM562 36h1v1h-1zM487 29h1v1h-1zM693 49h1v1h-1zM756 46h1v1h-1zM610 38h1v1h-1zM838 30h1v1h-1zM853 4h1v1h-1zM575 6h1v1h-1zM206 25h1v1h-1zM714 40h1v1h-1zM669 3h1v1h-1zM572 34h1v1h-1zM635 10h1v1h-1zM259 15h1v1h-1zM121 10h1v1h-1zM844 37h1v1h-1zM211 28h1v1h-1zM671 40h1v1h-1zM763 21h1v1h-1zM137 2h1v1h-1zM739 33h1v1h-1zM220 6h1v1h-1zM471 21h1v1h-1zM444 2h1v1h-1zM379 30h1v1h-1zM663 43h1v1h-1zM744 42h1v1h-1zM355 33h1v1h-1zM526 49h1v1h-1zM860 46h1v1h-1zM220 25h1v1h-1zM276 20h1v1h-1zM741 11h1v1h-1zM69 0h1v1h-1zM70 18h1v1h-1zM636 13h1v1h-1zM383 17h1v1h-1zM611 8h1v1h-1zM229 34h1v1h-1zM647 32h1v1h-1zM529 48h1v1h-1zM296 43h1v1h-1zM115 7h1v1h-1zM381 51h1v1h-1zM448 20h1v1h-1zM860 2h1v1h-1zM385 4h1v1h-1zM237 0h1v1h-1zM774 41h1v1h-1zM120 37h1v1h-1zM809 18h1v1h-1zM155 2h1v1h-1zM585 26h1v1h-1zM784 44h1v1h-1zM101 28h1v1h-1zM658 42h1v1h-1zM335 23h1v1h-1zM723 27h1v1h-1zM361 9h1v1h-1zM840 33h1v1h-1zM739 44h1v1h-1zM798 16h1v1h-1zM368 6h1v1h-1zM181 35h1v1h-1zM247 49h1v1h-1zM405 15h1v1h-1zM327 10h1v1h-1zM696 33h1v1h-1z"/></svg>

<!-- logo -->
<svg class="a" style="left:70px;top:118px" width="60" height="32" viewBox="70 118 60 32"><path fill="#f4f4f4" d="M74.4 146.4V120.8H80.6L94 137.6V120.8H100.1V146.4H93.9L80.5 129.6V146.4Z M100.6 146.4L110.4 120.8H116.4L126.2 146.4H119.8L113.4 128.6L107 146.4Z"/></svg>
<div class="t" style="left:74px;top:149px;font-size:16px;font-weight:bold;color:#ececec;-webkit-text-stroke:0.4px #ececec">Backup &amp; Replication</div>

<!-- dark toolbar -->
<div class="a" style="left:69px;top:168px;width:792px;height:43px;background:#4a4a4a;border-bottom:1px solid #3c3c3c"></div>
<svg class="a" style="left:80px;top:174px" width="29" height="29" viewBox="0 0 29 29"><circle cx="14.5" cy="14.5" r="12.7" fill="none" stroke="#fff" stroke-width="2.6"/><path d="M11 8.5L20.5 14.5L11 20.5Z" fill="#fff"/></svg>
<div class="t" style="left:420.5px;top:183px;font-size:16px;color:#fff">Manage</div>
<svg class="a" style="left:522px;top:175px" width="28" height="28" viewBox="0 0 28 28"><circle cx="14" cy="14" r="14" fill="#fff"/><path d="M14 6.5V21.5M6.5 14H21.5" stroke="#4b4b4b" stroke-width="4.8"/></svg>
<div class="t" style="left:560.5px;top:182.5px;font-size:16.86px;color:#fff">Create</div>

<!-- left panel -->
<div class="a" style="left:69px;top:211px;width:298px;height:376px;background:#fff"></div>
<div class="a" style="left:366px;top:211px;width:1px;height:376px;background:#cfcfcf"></div>
<svg class="a" style="left:77px;top:230.5px" width="7" height="7" viewBox="0 0 7 7"><path d="M6.3 0.5V6.3H0.3Z" fill="#333" stroke="#333" stroke-width="0.6" stroke-linejoin="round"/></svg>
<svg class="a" style="left:86px;top:222px" width="30" height="24" viewBox="86 222 30 24"><path d="M89.5 235.2L101.2 226.5L113 235.2" fill="none" stroke="#2196f3" stroke-width="2.6"/><path d="M93 235L101.2 229.4L109.4 235V243.6H103.2V237.9H99.2V243.6H93Z" fill="#2196f3"/><path d="M106 225V229.5L110 232.2V225Z" fill="#2196f3"/></svg>
<div class="a" style="left:69px;top:314px;width:298px;height:32px;background:#e2e2e2"></div>
<svg class="a" style="left:104px;top:256px" width="8" height="19"><path d="M2.5 1Q2.5 0 4 0H8V6H2Z M2 8H8V12.5H2Z M2 14.5H8V18H3Q2 18 2 17Z" fill="#8797a3"/></svg>
<div class="a" style="left:106px;top:282px;width:8px;height:22px;background:#1e88e5;border-radius:3px"></div>
<svg class="a" style="left:104px;top:320px" width="8" height="19"><path d="M2.5 1Q2.5 0 4 0H8V6H2Z M2 8H8V12.5H2Z M2 14.5H8V18H3Q2 18 2 17Z" fill="#1e88e5"/></svg>
<div class="a" style="left:106px;top:353px;width:8px;height:15px;background:#1e88e5;border-radius:3px"></div>

<!-- content -->
<div class="a" style="left:367px;top:211px;width:494px;height:376px;background:#fff"></div>
<div class="t" style="left:426px;top:226px;font-size:18.5px;color:#363636">Info</div>
<div class="a" style="left:389px;top:250px;width:413px;height:181px;border:1px solid #cfcfcf"></div>
<div class="t" style="left:445.5px;top:271px;font-size:15px;color:#363636">Runs on demand</div>
<div class="a" style="left:418px;top:310px;width:17px;height:17px;border-radius:50%;background:#1e88e5"></div>
<div class="t" style="left:445.5px;top:312px;font-size:15px;color:#1e88e5">1 stopped, 3 successful</div>
<div class="a" style="left:420px;top:346px;width:14px;height:29px;border:3px solid #1e88e5;border-radius:2px"></div>
<div class="t" style="left:445.5px;top:354px;font-size:15px;color:#363636">4 VMs (5 disks, 84.5 GB)</div>
<div class="a" style="left:396px;top:383px;width:399px;height:42px;background:#a92226;border-radius:5px"></div>
<svg class="a" style="left:402.5px;top:389px" width="32" height="32" viewBox="0 0 32 32"><circle cx="16" cy="16" r="15.8" fill="#fff"/><path d="M12.5 5.5H19.5L18.5 19H13.5Z" fill="#a92226"/><rect x="13.3" y="20.5" width="5.4" height="5.6" fill="#a92226"/></svg>
<div class="t" style="left:446px;top:396px;font-size:15px;color:#fff">1 alarm</div>
<div class="a" style="left:661px;top:386px;width:128px;height:36px;background:linear-gradient(#fdfdfd,#e6e6e6);border-radius:3px;border:1px solid #ddd"></div>
<div class="t" style="left:669.2px;top:397px;font-size:15px;color:#363636">Request Support</div>

<div class="t" style="left:824px;top:226px;font-size:18.5px;color:#363636">Job Schedule</div>
<div class="a" style="left:824px;top:250px;width:60px;height:181px;border:1px solid #cfcfcf"></div>
<svg class="a" style="left:838px;top:260px" width="30" height="34" viewBox="0 0 30 34">
<rect x="1" y="5" width="30" height="27.6" rx="1.8" fill="#1e88e5"/>
<rect x="5.7" y="0.8" width="6.2" height="8.6" rx="3" fill="#1e88e5"/><rect x="7.8" y="3" width="2.5" height="6.3" rx="1.2" fill="#fff"/>
<rect x="19.5" y="0.8" width="6.2" height="8.6" rx="3" fill="#1e88e5"/><rect x="21.6" y="3" width="2.5" height="6.3" rx="1.2" fill="#fff"/>
<g fill="#fff"><rect x="3" y="12" width="5" height="5.2"/><rect x="9.3" y="12" width="5.8" height="5.2"/><rect x="16.5" y="12" width="5.8" height="5.2"/><rect x="23.7" y="12" width="5.8" height="5.2"/>
<rect x="3" y="18.6" width="5" height="5.4"/><rect x="9.3" y="18.6" width="5.8" height="5.4"/><rect x="16.5" y="18.6" width="5.8" height="5.4"/><rect x="23.7" y="18.6" width="5.8" height="5.4"/>
<rect x="3" y="25.3" width="5" height="5.4"/><rect x="9.3" y="25.3" width="5.8" height="5.4"/><rect x="16.5" y="25.3" width="5.8" height="5.4"/><rect x="23.7" y="25.3" width="5.8" height="5.4"/></g></svg>
<svg class="a" style="left:837px;top:302px" width="32" height="32" viewBox="0 0 32 32"><circle cx="16.7" cy="15.7" r="13.4" fill="none" stroke="#1e88e5" stroke-width="4.7"/><path d="M17.6 8V17.2H11.2" fill="none" stroke="#1e88e5" stroke-width="2.5"/></svg>
<svg class="a" style="left:837px;top:344px" width="30" height="32" viewBox="0 0 30 32" fill="none" stroke="#1e88e5" stroke-width="1.4" stroke-linejoin="round">
<path d="M16 1.5L24 5.5V14L16 18L8.5 14V5.5Z M8.5 5.5L16 9.5L24 5.5 M16 9.5V18"/>
<path d="M8.5 14L16 18V26.5L8.5 30.5L1 26.5V18Z M1 18L8.5 22L16 18 M8.5 22V30.5"/>
<path d="M16 18L24 14L31 18V26.5L24 30.5L16 26.5 M24 22L31 18 M24 22V30.5 M16 18L24 22"/>
</svg>
<svg class="a" style="left:830px;top:380px" width="31" height="40" viewBox="830 380 31 40"><g fill="#2196f3"><rect x="846.20" y="389.90" width="4.20" height="4.10" transform="rotate(0.0 848.3 400.4)"/><rect x="846.20" y="389.90" width="4.20" height="4.10" transform="rotate(45.0 848.3 400.4)"/><rect x="846.20" y="389.90" width="4.20" height="4.10" transform="rotate(90.0 848.3 400.4)"/><rect x="846.20" y="389.90" width="4.20" height="4.10" transform="rotate(135.0 848.3 400.4)"/><rect x="846.20" y="389.90" width="4.20" height="4.10" transform="rotate(180.0 848.3 400.4)"/><rect x="846.20" y="389.90" width="4.20" height="4.10" transform="rotate(225.0 848.3 400.4)"/><rect x="846.20" y="389.90" width="4.20" height="4.10" transform="rotate(270.0 848.3 400.4)"/><rect x="846.20" y="389.90" width="4.20" height="4.10" transform="rotate(315.0 848.3 400.4)"/><circle cx="848.3" cy="400.4" r="8.1"/></g><circle cx="848.3" cy="400.4" r="4.2" fill="#fff"/><g fill="#2196f3"><rect x="863.80" y="384.00" width="3.40" height="3.40" transform="rotate(0.0 865.5 392)"/><rect x="863.80" y="384.00" width="3.40" height="3.40" transform="rotate(45.0 865.5 392)"/><rect x="863.80" y="384.00" width="3.40" height="3.40" transform="rotate(90.0 865.5 392)"/><rect x="863.80" y="384.00" width="3.40" height="3.40" transform="rotate(135.0 865.5 392)"/><rect x="863.80" y="384.00" width="3.40" height="3.40" transform="rotate(180.0 865.5 392)"/><rect x="863.80" y="384.00" width="3.40" height="3.40" transform="rotate(225.0 865.5 392)"/><rect x="863.80" y="384.00" width="3.40" height="3.40" transform="rotate(270.0 865.5 392)"/><rect x="863.80" y="384.00" width="3.40" height="3.40" transform="rotate(315.0 865.5 392)"/><circle cx="865.5" cy="392" r="5.6"/></g><circle cx="865.5" cy="392" r="2.8" fill="#fff"/><g fill="#2196f3"><rect x="863.80" y="402.00" width="3.40" height="3.40" transform="rotate(0.0 865.5 410)"/><rect x="863.80" y="402.00" width="3.40" height="3.40" transform="rotate(45.0 865.5 410)"/><rect x="863.80" y="402.00" width="3.40" height="3.40" transform="rotate(90.0 865.5 410)"/><rect x="863.80" y="402.00" width="3.40" height="3.40" transform="rotate(135.0 865.5 410)"/><rect x="863.80" y="402.00" width="3.40" height="3.40" transform="rotate(180.0 865.5 410)"/><rect x="863.80" y="402.00" width="3.40" height="3.40" transform="rotate(225.0 865.5 410)"/><rect x="863.80" y="402.00" width="3.40" height="3.40" transform="rotate(270.0 865.5 410)"/><rect x="863.80" y="402.00" width="3.40" height="3.40" transform="rotate(315.0 865.5 410)"/><circle cx="865.5" cy="410" r="5.6"/></g><circle cx="865.5" cy="410" r="2.8" fill="#fff"/></svg>


<div class="t" style="left:389.5px;top:446px;font-size:18.58px;color:#363636">Virtual Machines</div>
<div class="a" style="left:389px;top:470px;width:413px;height:130px;border:1px solid #cfcfcf"></div>
<svg class="a" style="left:401px;top:477px" width="25" height="26" viewBox="0 0 25 26">
<defs><linearGradient id="vg477" x1="0" y1="0" x2="0" y2="1"><stop offset="0" stop-color="#e4f3ff"/><stop offset="1" stop-color="#b9defb"/></linearGradient></defs>
<rect x="5.8" y="1" width="12.6" height="13.6" fill="url(#vg477)" stroke="#3d9cf2" stroke-width="1.6"/>
<rect x="10.5" y="6.5" width="13.6" height="12.6" fill="url(#vg477)" stroke="#3d9cf2" stroke-width="1.6" opacity=".85"/>
<rect x="1.6" y="9.6" width="11.6" height="14.6" fill="url(#vg477)" stroke="#3d9cf2" stroke-width="1.6" opacity=".9"/>
<path d="M13.8 8.7L24.2 17.4L13.8 26Z" fill="#00c400"/>
</svg><div class="a" style="left:426px;top:478px;width:97px;height:27px;background:#c0c0c0"></div><div class="t" style="left:589px;width:200px;text-align:right;top:483px;font-size:14.87px;color:#363636">Completed</div><svg class="a" style="left:401px;top:509px" width="25" height="26" viewBox="0 0 25 26">
<defs><linearGradient id="vg509" x1="0" y1="0" x2="0" y2="1"><stop offset="0" stop-color="#e4f3ff"/><stop offset="1" stop-color="#b9defb"/></linearGradient></defs>
<rect x="5.8" y="1" width="12.6" height="13.6" fill="url(#vg509)" stroke="#3d9cf2" stroke-width="1.6"/>
<rect x="10.5" y="6.5" width="13.6" height="12.6" fill="url(#vg509)" stroke="#3d9cf2" stroke-width="1.6" opacity=".85"/>
<rect x="1.6" y="9.6" width="11.6" height="14.6" fill="url(#vg509)" stroke="#3d9cf2" stroke-width="1.6" opacity=".9"/>
<path d="M13.8 8.7L24.2 17.4L13.8 26Z" fill="#00c400"/>
</svg><div class="a" style="left:430px;top:510px;width:97px;height:26px;background:#c0c0c0"></div><div class="t" style="left:589px;width:200px;text-align:right;top:515px;font-size:14.87px;color:#363636">Completed</div><svg class="a" style="left:401px;top:541px" width="25" height="26" viewBox="0 0 25 26">
<defs><linearGradient id="vg541" x1="0" y1="0" x2="0" y2="1"><stop offset="0" stop-color="#e4f3ff"/><stop offset="1" stop-color="#b9defb"/></linearGradient></defs>
<rect x="5.8" y="1" width="12.6" height="13.6" fill="url(#vg541)" stroke="#3d9cf2" stroke-width="1.6"/>
<rect x="10.5" y="6.5" width="13.6" height="12.6" fill="url(#vg541)" stroke="#3d9cf2" stroke-width="1.6" opacity=".85"/>
<rect x="1.6" y="9.6" width="11.6" height="14.6" fill="url(#vg541)" stroke="#3d9cf2" stroke-width="1.6" opacity=".9"/>
<path d="M13.8 8.7L24.2 17.4L13.8 26Z" fill="#00c400"/>
</svg><div class="a" style="left:429px;top:542.7px;width:106px;height:24px;background:#c0c0c0"></div><div class="t" style="left:589px;width:200px;text-align:right;top:547px;font-size:14.87px;color:#363636">Stopped</div><svg class="a" style="left:401px;top:573px" width="25" height="26" viewBox="0 0 25 26">
<defs><linearGradient id="vg573" x1="0" y1="0" x2="0" y2="1"><stop offset="0" stop-color="#e4f3ff"/><stop offset="1" stop-color="#b9defb"/></linearGradient></defs>
<rect x="5.8" y="1" width="12.6" height="13.6" fill="url(#vg573)" stroke="#3d9cf2" stroke-width="1.6"/>
<rect x="10.5" y="6.5" width="13.6" height="12.6" fill="url(#vg573)" stroke="#3d9cf2" stroke-width="1.6" opacity=".85"/>
<rect x="1.6" y="9.6" width="11.6" height="14.6" fill="url(#vg573)" stroke="#3d9cf2" stroke-width="1.6" opacity=".9"/>
<path d="M13.8 8.7L24.2 17.4L13.8 26Z" fill="#00c400"/>
</svg><div class="a" style="left:432px;top:574.7px;width:88px;height:26px;background:#c0c0c0"></div><div class="t" style="left:589px;width:200px;text-align:right;top:579px;font-size:14.87px;color:#363636">Completed</div>

<div class="t" style="left:825px;top:446px;font-size:18.5px;color:#363636">Target</div>
<div class="a" style="left:824px;top:470px;width:60px;height:130px;border:1px solid #cfcfcf"></div>
<svg class="a" style="left:836px;top:476px" width="25" height="27" viewBox="0 0 25 27"><g fill="#1e88e5">
<ellipse cx="12.5" cy="4" rx="12" ry="4"/><path d="M.5 5.5C.5 8 6 9.5 12.5 9.5S24.5 8 24.5 5.5V9.5C24.5 12 19 13.5 12.5 13.5S.5 12 .5 9.5Z"/>
<path d="M.5 11.5C.5 14 6 15.5 12.5 15.5S24.5 14 24.5 11.5V16C24.5 18.5 19 20 12.5 20S.5 18.5 .5 16Z"/>
<path d="M.5 18C.5 20.5 6 22 12.5 22S24.5 20.5 24.5 18V22.5C24.5 25 19 26.5 12.5 26.5S.5 25 .5 22.5Z"/></g>
<ellipse cx="12.5" cy="4" rx="7" ry="1.8" fill="#fff"/></svg>

<!-- toolbar -->
<div class="a" style="left:1px;top:44px;width:860px;height:36px;background:#fff"></div>
<svg class="a" style="left:12.2px;top:51.2px" width="21" height="21" viewBox="0 0 24 24"><path fill="#5f6368" d="M20 11H7.83l5.59-5.59L12 4l-8 8 8 8 1.41-1.41L7.83 13H20v-2z"/></svg>
<svg class="a" style="left:44.7px;top:51.2px" width="21" height="21" viewBox="0 0 24 24"><path fill="#bdc1c6" d="M12 4l-1.41 1.41L16.17 11H4v2h12.17l-5.58 5.59L12 20l8-8z"/></svg>
<svg class="a" style="left:76.5px;top:51.2px" width="21" height="21" viewBox="0 0 24 24"><path fill="#5f6368" d="M17.65 6.35A7.958 7.958 0 0 0 12 4c-4.420 0-7.99 3.58-7.99 8s3.57 8 7.99 8c3.73 0 6.84-2.55 7.73-6h-2.08A5.99 5.99 0 0 1 12 18c-3.31 0-6-2.69-6-6s2.69-6 6-6c1.66 0 3.14.69 4.22 1.78L13 11h7V4l-2.35 2.35z"/></svg>

<!-- omnibox -->
<div class="a" style="left:110px;top:48px;width:800px;height:28px;background:#f1f3f4;border-radius:14px"></div>
<div class="a" style="left:111px;top:50px;width:108px;height:24px;background:#c6c7c9;border-radius:12px"></div>
<svg class="a" style="left:120.2px;top:55.8px" width="14.4" height="12" viewBox="0 0 14 12"><path d="M7 0L14 12H0Z" fill="#c5221f"/><rect x="6.2" y="4" width="1.6" height="4.2" fill="#fff"/><rect x="6.2" y="9" width="1.6" height="1.6" fill="#fff"/></svg>
<div class="t" style="left:142px;top:55px;font-size:14px;color:#b3372d">Not secure</div>
<div class="t" style="left:229px;top:56px;font-size:14px;color:#333438">1</div>
<div class="a" style="left:234px;top:54px;width:58px;height:16px;background:#c0c0c0"></div>
<div class="t" style="left:292px;top:56px;font-size:13.96px;color:#333438">4:4443/c/main?id=7&amp;t=JOB</div>

<!-- bookmarks bar -->
<div class="a" style="left:1px;top:80px;width:860px;height:33px;background:#fff"></div>
<svg class="a" style="left:16px;top:87px" width="13" height="13" viewBox="0 0 13 13">
<rect x="0" y="0" width="3" height="3" fill="#ea1d1d"/><rect x="5" y="0" width="3" height="3" fill="#ea1d1d"/><rect x="10" y="0" width="3" height="3" fill="#ea1d1d"/>
<rect x="0" y="5" width="3" height="3" fill="#178a3c"/><rect x="5" y="5" width="3" height="3" fill="#0f7cf5"/><rect x="10" y="5" width="3" height="3" fill="#ee9c00"/>
<rect x="0" y="10" width="3" height="3" fill="#178a3c"/><rect x="5" y="10" width="3" height="3" fill="#f9a800"/><rect x="10" y="10" width="3" height="3" fill="#f9a800"/>
</svg>
<div class="t" style="left:39px;top:89px;font-size:11.85px;color:#3c4043">Apps</div>
<svg class="a" style="left:84px;top:87px" width="13" height="14" viewBox="0 0 13 14"><path d="M0.75 0.75H10.6V9.2H11.6V13.25H0.75Z" fill="#fde48a" stroke="#e8c43e" stroke-width="1.5"/><path d="M9.3 13.25V9.2H10.6" fill="none" stroke="#e8c43e" stroke-width="1"/></svg><div class="t" style="left:105px;top:88px;font-size:11.7px;color:#3c4043">New folder</div><svg class="a" style="left:531px;top:87px" width="13" height="14" viewBox="0 0 13 14"><path d="M0.75 0.75H10.6V9.2H11.6V13.25H0.75Z" fill="#fde48a" stroke="#e8c43e" stroke-width="1.5"/><path d="M9.3 13.25V9.2H10.6" fill="none" stroke="#e8c43e" stroke-width="1"/></svg><div class="t" style="left:553.4px;top:88px;font-size:11.7px;color:#3c4043">McKinsey</div><svg class="a" style="left:622px;top:87px" width="13" height="14" viewBox="0 0 13 14"><path d="M0.75 0.75H10.6V9.2H11.6V13.25H0.75Z" fill="#fde48a" stroke="#e8c43e" stroke-width="1.5"/><path d="M9.3 13.25V9.2H10.6" fill="none" stroke="#e8c43e" stroke-width="1"/></svg><div class="t" style="left:643.7px;top:88px;font-size:11.7px;color:#3c4043">McK</div><svg class="a" style="left:686px;top:87px" width="13" height="14" viewBox="0 0 13 14"><path d="M0.75 0.75H10.6V9.2H11.6V13.25H0.75Z" fill="#fde48a" stroke="#e8c43e" stroke-width="1.5"/><path d="M9.3 13.25V9.2H10.6" fill="none" stroke="#e8c43e" stroke-width="1"/></svg><div class="t" style="left:707.9px;top:88px;font-size:11.7px;color:#3c4043">AliExpress</div><svg class="a" style="left:779px;top:87px" width="13" height="14" viewBox="0 0 13 14"><path d="M0.75 0.75H10.6V9.2H11.6V13.25H0.75Z" fill="#fde48a" stroke="#e8c43e" stroke-width="1.5"/><path d="M9.3 13.25V9.2H10.6" fill="none" stroke="#e8c43e" stroke-width="1"/></svg><div class="t" style="left:800.8px;top:88px;font-size:11.7px;color:#3c4043">art</div><svg class="a" style="left:834px;top:87px" width="13" height="14" viewBox="0 0 13 14"><path d="M0.75 0.75H10.6V9.2H11.6V13.25H0.75Z" fill="#fde48a" stroke="#e8c43e" stroke-width="1.5"/><path d="M9.3 13.25V9.2H10.6" fill="none" stroke="#e8c43e" stroke-width="1"/></svg><div class="t" style="left:856px;top:88px;font-size:11.7px;color:#3c4043">b</div><div class="t" style="left:416.2px;top:89px;font-size:11.85px;color:#3c4043">Adobe Photoshop</div>


<!-- popup -->
<div class="a" style="left:110px;top:77px;width:320px;height:319px;background:#fff;border-radius:3px;box-shadow:0 0 0 1px rgba(0,0,0,.12),0 2px 6px rgba(0,0,0,.3);z-index:20">
<div class="t" style="left:17px;top:21px;font-size:14.85px;color:#d93025">Your connection to this site is not secure</div>
<svg class="a" style="left:299px;top:10px" width="10" height="10" viewBox="0 0 10 10"><path d="M0.8 0.8L9.2 9.2M9.2 0.8L0.8 9.2" stroke="#5f6368" stroke-width="2"/></svg>
<div class="t" style="left:17px;top:50px;font-size:12.03px;color:#333438">You should not enter any sensitive information on this</div>
<div class="t" style="left:17px;top:70px;font-size:11.65px;color:#333438">site (for example, passwords or credit cards), because</div>
<div class="t" style="left:17px;top:91px;font-size:11.89px;color:#333438">it could be stolen by attackers. <span style="color:#1a73e8">Learn more</span></div>
<div class="t" style="left:17px;top:119px;font-size:11.81px;color:#333438">You have chosen to disable security warnings for this</div>
<div class="t" style="left:17px;top:138px;font-size:11.65px;color:#333438">site. <span style="color:#1a73e8">Re-enable warnings</span></div>
<div class="a" style="left:0;top:182px;width:320px;height:1px;background:#dadce0"></div>
<svg class="a" style="left:18px;top:204px" width="14" height="14" viewBox="0 0 14 14"><path d="M1 0H13A1 1 0 0 1 14 1V13A1 1 0 0 1 13 14H1A1 1 0 0 1 0 13V1A1 1 0 0 1 1 0Z" fill="#5f6368"/><rect x="2" y="2.5" width="10" height="1.6" fill="#fff"/><rect x="2" y="5.5" width="4" height="1.4" fill="#fff"/><rect x="2" y="8" width="4" height="1.4" fill="#fff"/><circle cx="9.5" cy="8.5" r="1.8" fill="#fff"/></svg>
<div class="t" style="left:46px;top:206px;font-size:11.85px;color:#333438">Certificate <span style="color:#5f6368">(Invalid)</span></div>
<svg class="a" style="left:17.5px;top:243.3px" width="16" height="16" viewBox="0 0 15 15"><path d="M7.5 0.5A7 7 0 1 0 14.5 7.8A3 3 0 0 1 11 4.2A3 3 0 0 1 7.5 0.5Z" fill="#5f6368"/><circle cx="4.2" cy="5.5" r="1.2" fill="#fff"/><circle cx="5" cy="10" r="1.2" fill="#fff"/><circle cx="9.5" cy="10.5" r="1.1" fill="#fff"/><circle cx="8" cy="7" r="0.8" fill="#fff"/></svg>
<div class="t" style="left:46px;top:246px;font-size:11.65px;color:#333438">Cookies <span style="color:#5f6368">(38 in use)</span></div>
<svg class="a" style="left:15.6px;top:281px" width="19.5" height="19.5" viewBox="0 0 24 24"><path fill="#5f6368" d="M19.14 12.94c.04-.3.06-.61.06-.94 0-.32-.02-.64-.07-.94l2.03-1.58a.49.49 0 0 0 .12-.61l-1.92-3.32a.488.488 0 0 0-.59-.22l-2.39.96c-.5-.38-1.03-.7-1.62-.94l-.36-2.54a.484.484 0 0 0-.48-.41h-3.84c-.24 0-.43.17-.47.41l-.36 2.54c-.59.24-1.13.57-1.62.94l-2.39-.96c-.22-.08-.47 0-.59.22L2.74 8.87c-.12.21-.08.47.12.61l2.03 1.58c-.05.3-.09.63-.09.94s.02.64.07.94l-2.03 1.58a.49.49 0 0 0-.12.61l1.92 3.32c.12.22.37.29.59.22l2.39-.96c.5.38 1.03.7 1.62.94l.36 2.54c.05.24.24.41.48.41h3.84c.24 0 .44-.17.47-.41l.36-2.54c.59-.24 1.13-.56 1.62-.94l2.39.96c.22.08.47 0 .59-.22l1.92-3.32c.12-.22.07-.47-.12-.61l-2.01-1.58zM12 15.6c-1.98 0-3.6-1.62-3.6-3.6s1.62-3.6 3.6-3.6 3.6 1.62 3.6 3.6-1.62 3.6-3.6 3.6z"/></svg>
<div class="t" style="left:46px;top:286px;font-size:11.84px;color:#333438">Site settings</div>
</div>

<!-- badges -->
<div class="a" style="left:149px;top:43px;width:49px;height:49px;border-radius:50%;background:#ed1c24;z-index:30"></div>
<svg class="a" style="left:149px;top:43px;z-index:31" width="49" height="49" viewBox="149 43 49 49"><path fill="#fff" d="M172.8 56H178.2V73.1H181.8V76H169V73.1H172.8V60.4L169 62.3V59.3Z"/></svg>
<div class="a" style="left:267px;top:306px;width:46px;height:46px;border-radius:50%;background:#ed1c24;z-index:30"></div>
<div class="t" style="left:267px;top:315.5px;width:46px;text-align:center;font-weight:bold;font-size:27px;color:#fff;z-index:31">2</div>

</body></html>
